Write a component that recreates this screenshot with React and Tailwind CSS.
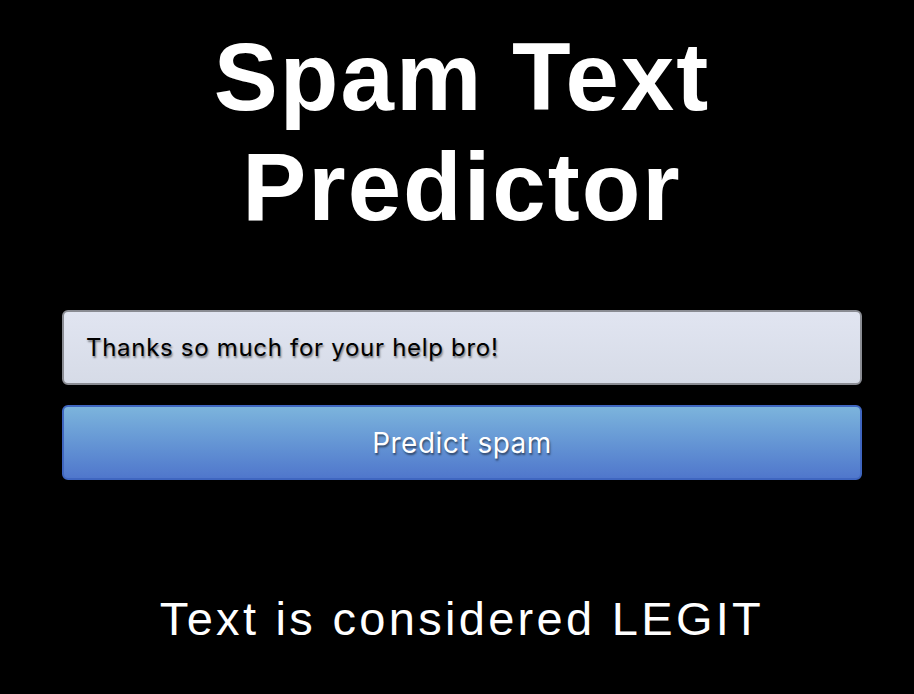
import React, { useState } from "react";

export default function App() {
  const [text, setText] = useState("Thanks so much for your help bro!");

  return (
    <div className="min-h-screen w-full bg-black font-['Liberation_Sans',Arial,sans-serif] text-white">
      <div className="ml-[62px] w-[800px] pt-[22px]">
        <h1 className="text-center text-[96px] font-bold leading-[110px] tracking-[2px]">
          Spam Text
          <br />
          Predictor
        </h1>

        <div className="mt-[68px] flex flex-col gap-[20px]">
          <input
            type="text"
            value={text}
            onChange={(e) => setText(e.target.value)}
            className="h-[75px] w-full rounded-[6px] border-2 border-[#8a8c93] bg-gradient-to-b from-[#e1e5f1] to-[#d6dbe7] px-[22px] font-['Inter',sans-serif] text-[24px] tracking-[0.7px] text-black outline-none [text-shadow:1px_2px_2px_rgba(0,0,0,0.45)]"
          />
          <button
            type="button"
            className="h-[75px] w-full rounded-[6px] border-2 border-[#3f66c0] bg-gradient-to-b from-[#7cb4dc] to-[#5077cc] font-['Inter',sans-serif] text-[28px] tracking-[0.5px] text-white [text-shadow:1px_2px_2px_rgba(0,0,0,0.5)]"
          >
            Predict spam
          </button>
        </div>

        <p className="mt-[113px] text-center text-[47px] leading-[52px] tracking-[3.3px]">
          Text is considered LEGIT
        </p>
      </div>
    </div>
  );
}
